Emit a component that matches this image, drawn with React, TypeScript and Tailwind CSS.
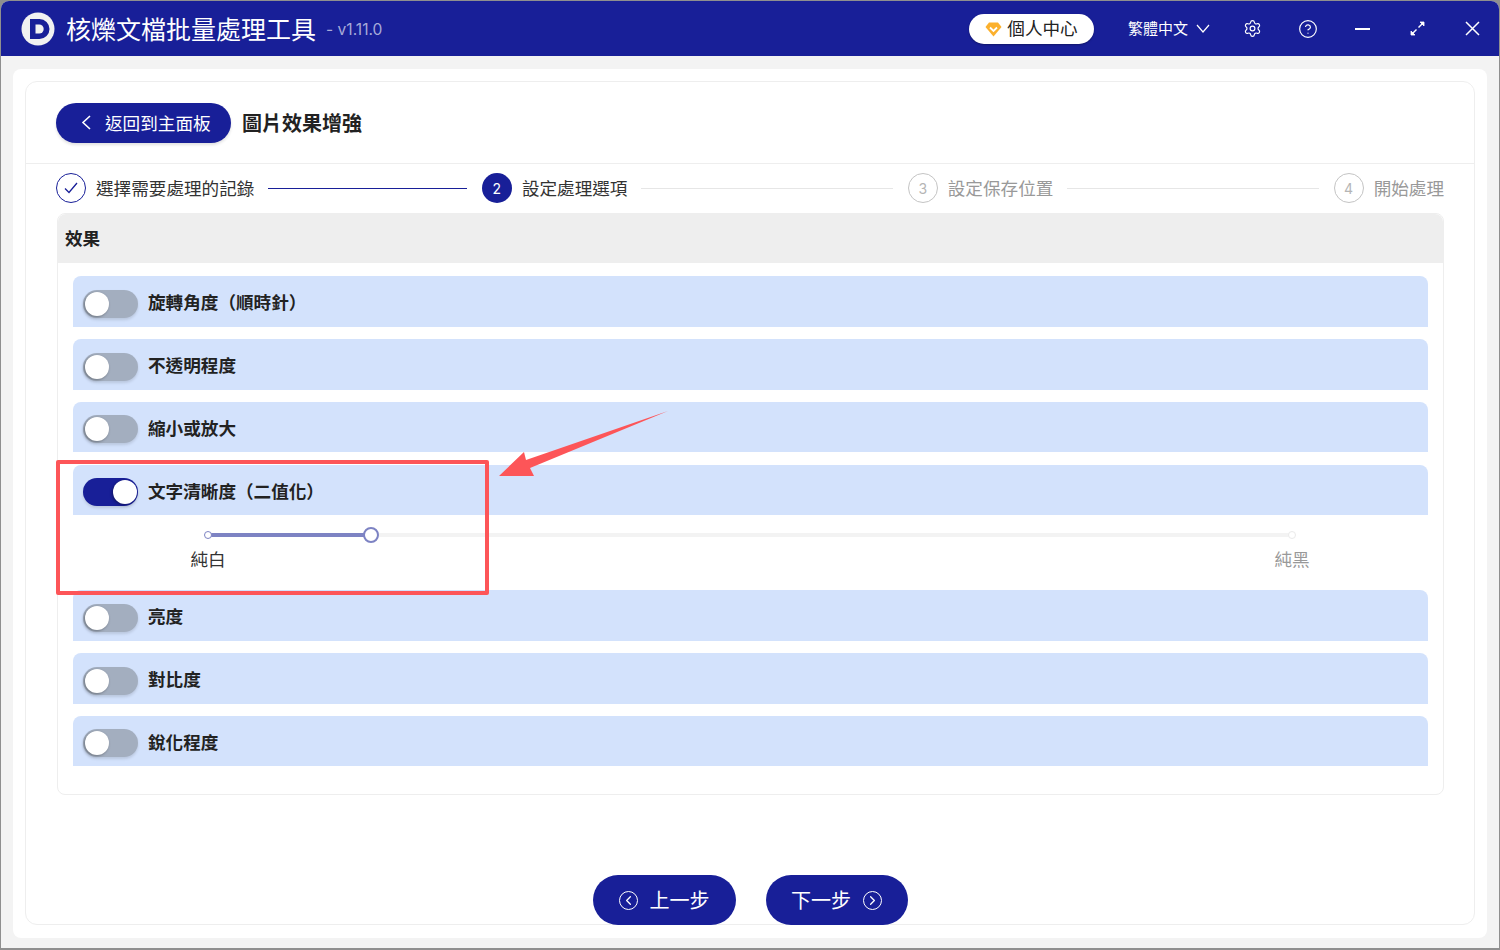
import { Settings, CircleHelp, ChevronLeft, ChevronRight } from "lucide-react";

const font = "font-['Inter','Noto_Sans_CJK_TC','Noto_Sans_CJK_SC',sans-serif]";

function Toggle({ on }: { on?: boolean }) {
  return (
    <div className={`relative w-[55px] h-[28px] rounded-full shrink-0 shadow-[0_2px_3px_rgba(0,0,0,0.12)] ${on ? "bg-[#181f98]" : "bg-[#a3aebf]"}`}>
      <div className={`absolute top-[2px] w-[24px] h-[24px] rounded-full bg-white shadow-[-1px_1px_3px_rgba(0,0,0,0.35)] ${on ? "right-[1px]" : "left-[2px]"}`} />
    </div>
  );
}

function Row({ label, on, size }: { label: string; on?: boolean; size: "tall" | "short" | "end" }) {
  const box = size === "tall" ? "h-[51px] mb-[12px]" : size === "short" ? "h-[50px] mb-[13px]" : "h-[50px]";
  return (
    <div className={`${box} bg-[#d3e2fc] rounded-t-[8px] flex items-center pl-[10px] pt-[4px] gap-[10px]`}>
      <Toggle on={on} />
      <span className="text-[17.6px] font-bold text-[#222]">{label}</span>
    </div>
  );
}

function Step({ n, label, state, last }: { n: number; label: string; state: "done" | "active" | "todo"; last?: boolean }) {
  const circle =
    state === "done"
      ? "border border-[#181f98] text-[#181f98]"
      : state === "active"
      ? "bg-[#181f98] text-white"
      : "border border-[#c4c4c4] text-[#b5b5b5]";
  return (
    <div className={`flex items-center ${last ? "shrink-0" : "flex-1"}`}>
      <div className={`w-[30px] h-[30px] rounded-full flex items-center justify-center text-[14px] shrink-0 ${circle}`}>
        {state === "done" ? (
          <svg width="14" height="12" viewBox="0 0 14 12" fill="none" stroke="currentColor" strokeWidth="1.3">
            <path d="M1 6.5l4 4L13 1" />
          </svg>
        ) : (
          n
        )}
      </div>
      <span className={`ml-[10px] mt-[2px] text-[17.6px] whitespace-nowrap ${state === "todo" ? "text-[#999]" : "text-[#333]"}`}>{label}</span>
      {!last && <div className={`flex-1 h-px ml-[14px] mr-[15px] ${state === "done" ? "bg-[#181f98]" : "bg-[#e6e6e6]"}`} />}
    </div>
  );
}

function HeaderIcon({ children }: { children: React.ReactNode }) {
  return <div className="w-[55px] h-full flex items-center justify-center shrink-0">{children}</div>;
}

export default function App() {
  return (
    <div className={`relative w-[1500px] h-[950px] overflow-hidden bg-[#8f8f8f] pt-px px-px pb-[2px] ${font}`}>
      <div className="h-full flex flex-col bg-[#f3f3f3] rounded-t-[8px] overflow-hidden">
        <header className="h-[55px] shrink-0 bg-[#181f98] flex items-center text-white pr-[0px] mr-[-1px]">
          <svg width="36" height="36" viewBox="0 0 36 36" className="ml-[19px] shrink-0">
            <circle cx="18" cy="18" r="16.5" fill="#f1f1f1" />
            <path d="M31 27a16.5 16.5 0 0 1-24 3 16.5 16.5 0 0 0 24-3z" fill="#9c9cab" />
            <path d="M10 8h9.5a10 10 0 0 1 0 20H10z" fill="#181f98" />
            <path d="M15.5 13.5h3.7a4.5 4.5 0 0 1 0 9h-3.7z" fill="#f1f1f1" />
          </svg>
          <span className="ml-[10px] mt-[3px] text-[25px] leading-none">核爍文檔批量處理工具</span>
          <span className="ml-[10px] mt-[3px] text-[15.6px] text-[#a7aad8]">- v1.11.0</span>
          <div className="ml-auto w-[125px] h-[30px] mr-[34px] bg-white rounded-full flex items-center justify-center gap-[5px] text-[17.6px] text-[#222] shadow-[0_1px_2px_rgba(0,0,0,0.3)]">
            <svg width="17" height="15" viewBox="0 0 17 15" className="mt-[2px]">
              <path d="M4 .5h9l3.5 4.5-8 9.5-8-9.5z" fill="#fbb02d" />
              <path d="M5 5.5l3.5 3.5 3.5-3.5" fill="none" stroke="#fff" strokeWidth="1.8" />
            </svg>
            <span className="mt-[2px]">個人中心</span>
          </div>
          <span className="text-[15px] mt-[2px]">繁體中文</span>
          <svg width="14" height="9" viewBox="0 0 14 9" fill="none" stroke="#fff" strokeWidth="1.2" className="ml-[8px] mr-[15px]">
            <path d="M1 1l6 7 6-7" />
          </svg>
          <HeaderIcon>
            <Settings size={19} strokeWidth={1.5} />
          </HeaderIcon>
          <HeaderIcon>
            <CircleHelp size={20} strokeWidth={1.4} />
          </HeaderIcon>
          <HeaderIcon>
            <div className="w-[15px] h-[2px] bg-white" />
          </HeaderIcon>
          <HeaderIcon>
            <svg width="15" height="15" viewBox="0 0 15 15" fill="none" stroke="#fff" strokeWidth="1.4">
              <path d="M8.5 6.5L13 2" />
              <path d="M10 1h4v4z" fill="#fff" strokeWidth="0.8" />
              <path d="M6.5 8.5L2 13" />
              <path d="M1 10v4h4z" fill="#fff" strokeWidth="0.8" />
            </svg>
          </HeaderIcon>
          <HeaderIcon>
            <svg width="15" height="15" viewBox="0 0 15 15" fill="none" stroke="#fff" strokeWidth="1.5">
              <path d="M1 1l13 13M14 1L1 14" />
            </svg>
          </HeaderIcon>
        </header>

        <main className="flex-1 mx-[12px] mt-[13px] mb-[10px] bg-white rounded-[8px] pt-[12px] px-[12px] pb-[13px] flex min-h-0">
          <div className="flex-1 border border-[#eeeeee] rounded-[12px] flex flex-col min-w-0">
            <div className="h-[82px] shrink-0 border-b border-[#eeeeee] flex items-center px-[30px]">
              <div className="w-[175px] h-[40px] rounded-full bg-[#181f98] text-white flex items-center shadow-[0_2px_3px_rgba(0,0,0,0.12)]">
                <svg width="10" height="15" viewBox="0 0 10 15" fill="none" stroke="#fff" strokeWidth="1.6" className="ml-[25px]">
                  <path d="M9 1L2 7.5 9 14" />
                </svg>
                <span className="ml-[14px] mt-[3px] text-[17.6px]">返回到主面板</span>
              </div>
              <h1 className="ml-[11px] mt-[3px] text-[20px] font-bold text-[#222]">圖片效果增強</h1>
            </div>

            <div className="flex items-center mx-[30px] mt-[9px] h-[30px] shrink-0">
              <Step n={1} label="選擇需要處理的記錄" state="done" />
              <Step n={2} label="設定處理選項" state="active" />
              <Step n={3} label="設定保存位置" state="todo" />
              <Step n={4} label="開始處理" state="todo" last />
            </div>

            <div className="ml-[31px] mr-[30px] mt-[10px] border border-[#eeeeee] rounded-[8px] shrink-0">
              <div className="h-[49px] bg-[#eeeeee] rounded-t-[8px] flex items-center pl-[7px] pt-[2px] text-[17.6px] font-bold text-[#222]">效果</div>
              <div className="px-[15px] pt-[13px] pb-[28px]">
                <Row label="旋轉角度（順時針）" size="tall" />
                <Row label="不透明程度" size="tall" />
                <Row label="縮小或放大" size="short" />
                <Row label="文字清晰度（二值化）" on size="end" />
                <div className="h-[75px] pl-[135px] pr-[136px] pt-[18px]">
                  <div className="relative h-[4px] bg-[#f3f3f3] rounded-full">
                    <div className="h-full w-[163px] bg-[#7d83c3] rounded-full" />
                    <div className="absolute left-[-4px] top-[-2px] w-[8px] h-[8px] rounded-full bg-white border border-[#7d83c3]" />
                    <div className="absolute left-[155px] top-[-6px] w-[16px] h-[16px] rounded-full bg-white border-2 border-[#7d83c3]" />
                    <div className="absolute right-[-4px] top-[-2px] w-[8px] h-[8px] rounded-full bg-white border border-[#eaeaea]" />
                  </div>
                  <div className="flex justify-between mt-[10px] mx-[-17.6px] text-[17.6px] leading-[26px]">
                    <span className="text-[#333]">純白</span>
                    <span className="text-[#999]">純黑</span>
                  </div>
                </div>
                <Row label="亮度" size="tall" />
                <Row label="對比度" size="tall" />
                <Row label="銳化程度" size="end" />
              </div>
            </div>

            <div className="mt-auto mb-[-1px] flex justify-center gap-[30px]">
              <div className="w-[143px] h-[50px] rounded-full bg-[#181f98] text-white flex items-center justify-center gap-[12px] text-[20px]">
                <span className="w-[19px] h-[19px] rounded-full border-[1.5px] border-white flex items-center justify-center">
                  <ChevronLeft size={15} strokeWidth={2} />
                </span>
                <span className="mt-[2px]">上一步</span>
              </div>
              <div className="w-[142px] h-[50px] rounded-full bg-[#181f98] text-white flex items-center justify-center gap-[12px] text-[20px]">
                <span className="mt-[2px]">下一步</span>
                <span className="w-[19px] h-[19px] rounded-full border-[1.5px] border-white flex items-center justify-center">
                  <ChevronRight size={15} strokeWidth={2} />
                </span>
              </div>
            </div>
          </div>
        </main>
      </div>

      <div className="absolute left-[56px] top-[460px] w-[433px] h-[135px] border-[4px] border-[#fd5558] rounded-[2px] pointer-events-none" />
      <svg width="200" height="90" viewBox="490 400 200 90" className="absolute left-[490px] top-[400px] pointer-events-none">
        <polygon points="668,411 526,460 524,452 499,476 534,476 530,468" fill="#fd5558" />
      </svg>
    </div>
  );
}
